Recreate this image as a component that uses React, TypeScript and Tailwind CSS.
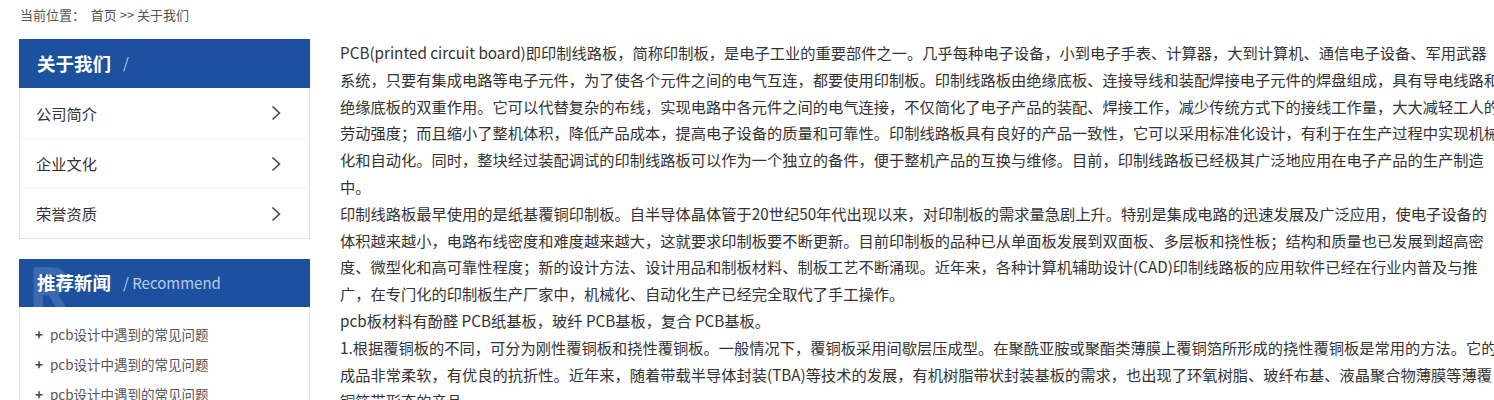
import React from "react";

const FONT = { fontFamily: '"Noto Sans CJK SC", "Noto Sans", sans-serif' };

const aboutMenu = ["公司简介", "企业文化", "荣誉资质"];
const newsList = ["pcb设计中遇到的常见问题", "pcb设计中遇到的常见问题", "pcb设计中遇到的常见问题"];

const paragraphs: string[][] = [
  [
    "PCB(printed circuit board)即印制线路板，简称印制板，是电子工业的重要部件之一。几乎每种电子设备，小到电子手表、计算器，大到计算机、通信电子设备、军用武器",
    "系统，只要有集成电路等电子元件，为了使各个元件之间的电气互连，都要使用印制板。印制线路板由绝缘底板、连接导线和装配焊接电子元件的焊盘组成，具有导电线路和",
    "绝缘底板的双重作用。它可以代替复杂的布线，实现电路中各元件之间的电气连接，不仅简化了电子产品的装配、焊接工作，减少传统方式下的接线工作量，大大减轻工人的",
    "劳动强度；而且缩小了整机体积，降低产品成本，提高电子设备的质量和可靠性。印制线路板具有良好的产品一致性，它可以采用标准化设计，有利于在生产过程中实现机械",
    "化和自动化。同时，整块经过装配调试的印制线路板可以作为一个独立的备件，便于整机产品的互换与维修。目前，印制线路板已经极其广泛地应用在电子产品的生产制造",
    "中。",
  ],
  [
    "印制线路板最早使用的是纸基覆铜印制板。自半导体晶体管于20世纪50年代出现以来，对印制板的需求量急剧上升。特别是集成电路的迅速发展及广泛应用，使电子设备的",
    "体积越来越小，电路布线密度和难度越来越大，这就要求印制板要不断更新。目前印制板的品种已从单面板发展到双面板、多层板和挠性板；结构和质量也已发展到超高密",
    "度、微型化和高可靠性程度；新的设计方法、设计用品和制板材料、制板工艺不断涌现。近年来，各种计算机辅助设计(CAD)印制线路板的应用软件已经在行业内普及与推",
    "广，在专门化的印制板生产厂家中，机械化、自动化生产已经完全取代了手工操作。",
  ],
  ["pcb板材料有酚醛 PCB纸基板，玻纤 PCB基板，复合 PCB基板。"],
  [
    "1.根据覆铜板的不同，可分为刚性覆铜板和挠性覆铜板。一般情况下，覆铜板采用间歇层压成型。在聚酰亚胺或聚酯类薄膜上覆铜箔所形成的挠性覆铜板是常用的方法。它的",
    "成品非常柔软，有优良的抗折性。近年来，随着带载半导体封装(TBA)等技术的发展，有机树脂带状封装基板的需求，也出现了环氧树脂、玻纤布基、液晶聚合物薄膜等薄覆",
    "铜箔带形态的产品。",
  ],
];

function Chevron() {
  return (
    <svg width="10" height="16" viewBox="0 0 10 16" aria-hidden>
      <polyline points="1.5,1.5 8.5,8 1.5,14.5" fill="none" stroke="#444" strokeWidth="1.6" />
    </svg>
  );
}

export default function App() {
  return (
    <div className="w-full h-[400px] overflow-hidden bg-white text-[#333]" style={FONT}>
      <div className="pl-5 pt-[6px] h-[39px] text-[13px] leading-[18px] text-[#555]">
        当前位置：&nbsp;&nbsp;首页 &gt;&gt; 关于我们
      </div>

      <div className="flex gap-[30px] pl-[19px]">
        <aside className="w-[291px] shrink-0">
          <div className="border border-t-0 border-[#e3e3e3]">
            <div className="h-[49px] bg-[#1c51a0] flex items-center pl-[18px] -mx-px">
              <span className="text-white text-[18.5px] font-bold">关于我们</span>
              <span className="ml-3 text-[15px] text-[#b9cbe8]">/</span>
            </div>
            {aboutMenu.map((item, i) => (
              <div
                key={item}
                className={`h-[50px] flex items-center justify-between pl-4 pr-7 text-[15.25px] text-[#333] ${
                  i > 0 ? "border-t border-[#f2f2f2]" : ""
                }`}
              >
                <span>{item}</span>
                <Chevron />
              </div>
            ))}
          </div>

          <div className="mt-5 border border-t-0 border-[#e3e3e3]">
            <div className="relative h-[48px] bg-[#1c51a0] flex items-center pl-[18px] -mx-px overflow-hidden">
              <span className="absolute left-[9px] top-[-4px] text-[62px] leading-none font-bold text-white/15">
                R
              </span>
              <span className="relative text-white text-[18.5px] font-bold">推荐新闻</span>
              <span className="relative ml-3 text-[15px] text-[#b9cbe8]">/ Recommend</span>
            </div>
            <ul className="pt-[12px] pl-[15px] pb-2">
              {newsList.map((n, i) => (
                <li key={i} className="h-[30px] flex items-center text-[13.5px] text-[#555]">
                  <span className="w-[15px] font-bold text-[#444]">+</span>
                  <span>{n}</span>
                </li>
              ))}
            </ul>
          </div>
        </aside>

        <main className="flex-1 min-w-0 text-[15.25px] leading-[26.8px] text-[#333] whitespace-nowrap">
          {paragraphs.map((lines, i) => (
            <p key={i}>
              {lines.map((l, j) => (
                <span key={j} className="block">
                  {l}
                </span>
              ))}
            </p>
          ))}
        </main>
      </div>
    </div>
  );
}
